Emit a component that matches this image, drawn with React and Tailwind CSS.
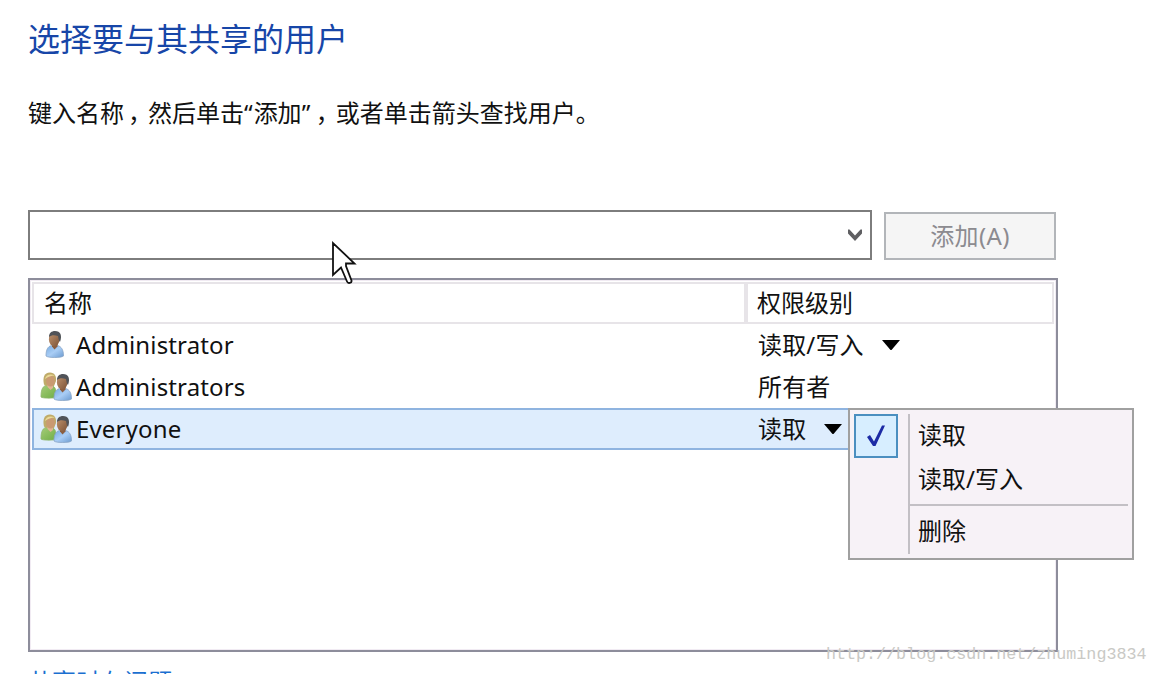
import React from "react";

const rows = [
  { name: "Administrator", level: "读取/写入", icon: "user", menu: true },
  { name: "Administrators", level: "所有者", icon: "group" },
  { name: "Everyone", level: "读取", icon: "group", menu: true, selected: true },
];

const IconDefs = () => (
  <svg width="0" height="0" className="absolute">
    <defs>
      <linearGradient id="blue" x1="0" y1="0" x2="1" y2="1">
        <stop offset="0" stopColor="#78abe0" />
        <stop offset="0.5" stopColor="#a9cdf5" />
        <stop offset="1" stopColor="#6c9bd0" />
      </linearGradient>
      <linearGradient id="green" x1="0" y1="0" x2="1" y2="1">
        <stop offset="0" stopColor="#a5cc78" />
        <stop offset="1" stopColor="#6fae45" />
      </linearGradient>
      <linearGradient id="skin" x1="0" y1="0" x2="1" y2="1">
        <stop offset="0" stopColor="#c0946f" />
        <stop offset="1" stopColor="#7d5438" />
      </linearGradient>
    </defs>
  </svg>
);

const Man = () => (
  <g>
    <path
      d="M0.500 25.500c0-6 1.500-9.500 5.500-10.500h6c4 1 6 4.500 6 10.500-2 2-15.500 2-17.500 0z"
      fill="url(#blue)"
      stroke="#8aa6c6"
      strokeWidth="0.8"
    />
    <path d="M6.500 13.500h5.500v2.500L9 19l-2.500-3z" fill="#8b5e40" />
    <ellipse cx="8.700" cy="8.800" rx="5.300" ry="7" fill="url(#skin)" />
    <path
      d="M3.500 6.500C3.500 2.500 6 0.500 9.500 0.500c5.500 0 7.500 4.500 5 11-1.500-1.500-1.500-4-2-6C9 4.500 6 4.500 3.500 6.500z"
      fill="#505358"
    />
  </g>
);

const UserIcon = () => (
  <svg width="32" height="32" viewBox="0 0 32 32">
    <g transform="translate(5.500 1.500)">
      <Man />
    </g>
  </svg>
);

const GroupIcon = () => (
  <svg width="32" height="32" viewBox="0 0 32 32">
    <path
      d="M1 26c0-6 1-10 4.500-11.500h6c4 1 5 5 5 11.500-1 1.500-14.500 1.500-15.500 0z"
      fill="url(#green)"
      stroke="#8db56c"
      strokeWidth="0.8"
    />
    <path
      d="M4 13.500C2.500 7 4 1.500 10 1.500c4.500 0 6.500 3.500 6 8.500l-2 5H6z"
      fill="#bfab69"
    />
    <path d="M7.500 12h5.500v5L10.500 19l-3-3z" fill="#e0b493" />
    <ellipse cx="10.500" cy="10" rx="4.400" ry="5.500" fill="#c99a72" />
    <path d="M5 8c.5-4 5-6 10-3.500-4 0-7 1.500-10 3.500z" fill="#ead998" />
    <g transform="translate(13.500 2.500)">
      <Man />
    </g>
  </svg>
);

const DropArrow = () => (
  <svg width="18" height="10" viewBox="0 0 18 10">
    <path d="M0 0h18L9.500 10h-1z" fill="#000" />
  </svg>
);

const Cursor = () => (
  <svg
    className="absolute left-[331px] top-[240px]"
    width="26"
    height="45"
    viewBox="0 0 26 45"
  >
    <path
      d="M2 3v32l8-7.500 6 14c1 2.500 5 1.500 4.500-1L15 26v-2.500h8.500z"
      fill="#fff"
      stroke="#111"
      strokeWidth="1.8"
    />
  </svg>
);

const PermissionMenu = () => (
  <div className="absolute left-[848px] top-[408px] flex h-[152px] w-[286px] border-2 border-[#a0a0a0] bg-[#f7f2f7] p-1">
    <div className="w-[54px] shrink-0">
      <div className="flex h-11 w-11 items-center justify-center border-2 border-[#4b8fc0] bg-[#d7eeff]">
        <svg width="20" height="24" viewBox="0 0 20 24">
          <path d="M1 13l3-2 4 6.500L16 1.500h3L9.500 22H7z" fill="#1c2ba5" />
        </svg>
      </div>
    </div>
    <div className="flex flex-1 flex-col border-l-2 border-[#c3c0c5]">
      <div className="h-11 pl-2 leading-[42px]">读取</div>
      <div className="h-[46px] pl-2 leading-[42px]">读取/写入</div>
      <div className="h-[50px] border-t-2 border-[#c3c0c5] pl-2 leading-[50px]">
        删除
      </div>
    </div>
  </div>
);

const Comma = () => <span className="-mr-1 pl-1">，</span>;

export default function App() {
  return (
    <div className="relative h-[674px] w-[1158px] overflow-hidden bg-white pl-7 font-['Noto_Sans','Noto_Sans_CJK_SC',sans-serif] text-[24px] text-[#111]">
      <IconDefs />
      <h1 className="h-[63px] pt-[15px] text-[32px] leading-[48px] font-normal text-[#1746a8]">
        选择要与其共享的用户
      </h1>
      <p className="mt-8 h-9 leading-9 whitespace-nowrap">
        键入名称
        <Comma />
        然后单击<span className="tracking-[1px]">“</span>添加
        <span className="tracking-[1.5px]">”</span>
        <Comma />
        或者单击箭头查找用户。
      </p>

      <div className="mt-[79px] flex gap-3">
        <div className="flex h-[50px] w-[844px] items-center justify-end border-2 border-[#7d7d7d] pt-px pr-[7px]">
          <svg width="16" height="13" viewBox="0 0 16 13">
            <path
              d="M1 0.500v4l7 7.500 7-7.500v-4h-1.500L8 6.500 2.500 0.500z"
              fill="#5f5f62"
            />
          </svg>
        </div>
        <button className="mt-0.5 h-12 w-[172px] border-2 border-[#b2b5b9] bg-[#f5f5f5] leading-[42px] tracking-[0.4px] text-[#8c8b90]">
          添加(A)
        </button>
      </div>

      <div className="mt-[18px] h-[374px] w-[1030px] border-2 border-[#8d8d9b] p-px outline-1 -outline-offset-3 outline-[#f1ebf3]">
        <div className="mx-px mt-px flex h-[42px] border-2 border-[#e7e4e8] leading-[38px]">
          <div className="w-[714px] border-r-4 border-[#e7e4e8] pl-2.5">
            名称
          </div>
          <div className="pl-[9px]">权限级别</div>
        </div>
        {rows.map((row) => (
          <div
            key={row.name}
            className={`mx-px flex h-[42px] items-center border-2 pl-1.5 ${
              row.selected
                ? "border-[#8fb4e0] bg-[#deedfd]"
                : "border-transparent"
            }`}
          >
            {row.icon === "user" ? <UserIcon /> : <GroupIcon />}
            <div className="w-[686px] pl-1 leading-[38px] tracking-[0.15px]">
              {row.name}
            </div>
            <div className="flex items-center gap-[18px] leading-[38px] tracking-[0.15px]">
              {row.level}
              {row.menu && <DropArrow />}
            </div>
          </div>
        ))}
      </div>

      <a className="mt-3 block h-9 leading-9 text-[#1b6fd0]">共享时有问题</a>

      <PermissionMenu />
      <Cursor />
      <div className="absolute top-[642px] left-[826px] font-['Liberation_Mono','Noto_Sans_CJK_SC',monospace] text-[16.7px] leading-[26px] whitespace-nowrap text-[#c9c9c5]">
        http://blog.csdn.net/zhuming3834
      </div>
    </div>
  );
}
